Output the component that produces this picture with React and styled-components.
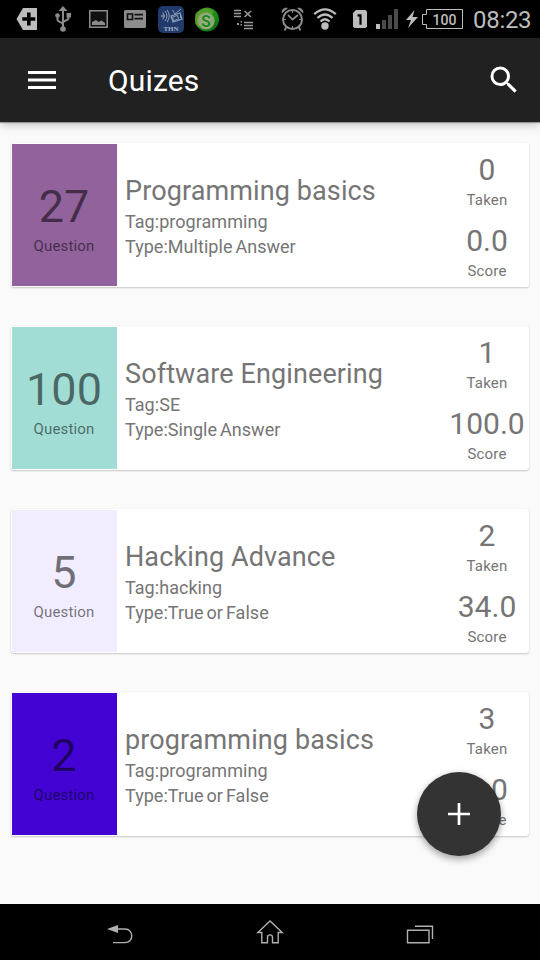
import React from "react";
import styled, { createGlobalStyle } from "styled-components";

const GlobalStyle = createGlobalStyle`
  * { box-sizing: border-box; }
  body { margin: 0; background: #fafafa; font-family: Roboto, sans-serif; }
`;

const Screen = styled.div`
  position: relative;
  display: flex;
  flex-direction: column;
  width: 540px;
  height: 960px;
  overflow: hidden;
  background: #fafafa;
`;

const StatusBar = styled.header`
  display: flex;
  align-items: center;
  height: 38px;
  flex: none;
  background: #000;
`;

const Icon = styled.svg`
  display: block;
  flex: none;
  width: ${(p) => p.$w}px;
  height: ${(p) => p.$h}px;
  margin-left: ${(p) => p.$gap || 0}px;
`;

const Clock = styled.time`
  margin-left: 10px;
  padding-top: 1px;
  font-size: 24px;
  line-height: 28px;
  letter-spacing: -0.3px;
  color: #bcbcbc;
`;

const AppBar = styled.div`
  position: relative;
  display: flex;
  align-items: center;
  height: 84px;
  flex: none;
  padding: 0 18px 0 24px;
  background: #212121;
  box-shadow: 0 1px 1px rgba(0, 0, 0, 0.3), 0 3px 9px rgba(0, 0, 0, 0.22);
`;

const Title = styled.h1`
  flex: 1;
  margin: 0 0 0 48px;
  padding-top: 2px;
  font-size: 30px;
  font-weight: 400;
  line-height: 36px;
  letter-spacing: 0.15px;
  color: #fff;
`;

const IconButton = styled.button`
  display: flex;
  padding: 0;
  border: 0;
  background: none;
`;

const List = styled.main`
  flex: 1;
  display: flex;
  flex-direction: column;
  gap: 39px;
  padding: 21px 11px 0;
`;

const Card = styled.article`
  display: flex;
  height: 144px;
  flex: none;
  padding: 1px 0 1px 1px;
  border-radius: 3px;
  background: #fff;
  box-shadow: 0 1px 2px rgba(0, 0, 0, 0.2), 0 0 2px rgba(0, 0, 0, 0.06);
`;

const CountPanel = styled.div`
  display: flex;
  flex-direction: column;
  align-items: center;
  gap: 4px;
  width: 105px;
  padding: 36px 1px 0 0;
  background: ${(p) => p.$color};
  color: rgba(0, 0, 0, 0.54);
`;

const Count = styled.div`
  font-size: 45px;
  line-height: 53px;
`;

const Caption = styled.div`
  font-size: 15px;
  line-height: 18px;
  letter-spacing: 0.18px;
`;

const Details = styled.div`
  flex: 1;
  padding: 31px 0 0 8px;
  color: #757575;
`;

const Name = styled.h2`
  margin: 0 0 2px;
  font-size: 27px;
  font-weight: 400;
  line-height: 32px;
  letter-spacing: 0.11px;
  white-space: nowrap;
`;

const Meta = styled.div`
  font-size: 18px;
  line-height: 25px;
  letter-spacing: 0.04px;
  word-spacing: -1.6px;
`;

const Stats = styled.div`
  display: flex;
  flex-direction: column;
  gap: 14px;
  width: 84px;
  padding-top: 8px;
  color: #757575;
  text-align: center;
`;

const Stat = styled.div`
  display: flex;
  flex-direction: column;
  gap: 4px;
`;

const StatValue = styled.div`
  font-size: 30px;
  line-height: 35px;
`;

const Fab = styled.button`
  position: absolute;
  left: 417px;
  top: 772px;
  display: flex;
  align-items: center;
  justify-content: center;
  width: 84px;
  height: 84px;
  padding: 0;
  border: 0;
  border-radius: 50%;
  background: #333;
  box-shadow: 0 4px 7px rgba(0, 0, 0, 0.28), 0 0 6px rgba(0, 0, 0, 0.12);
`;

const NavBar = styled.nav`
  display: flex;
  justify-content: center;
  gap: 122px;
  align-items: center;
  height: 56px;
  flex: none;
  padding-top: 2px;
  background: #000;
`;

const quizzes = [
  { count: 27, color: "#91629c", name: "Programming basics", tag: "programming", type: "Multiple Answer", taken: 0, score: "0.0" },
  { count: 100, color: "#a1dcd5", name: "Software Engineering", tag: "SE", type: "Single Answer", taken: 1, score: "100.0" },
  { count: 5, color: "#f1edfe", name: "Hacking Advance", tag: "hacking", type: "True or False", taken: 2, score: "34.0" },
  { count: 2, color: "#4304d3", name: "programming basics", tag: "programming", type: "True or False", taken: 3, score: "0.0" },
];

function StatusIcons() {
  return (
    <>
      <Icon $w={21} $h={22} $gap={16} viewBox="0 0 21 22">
        <path d="M.5 11 7 0h14v22H7z" fill="#bdbdbd" />
        <path d="M12.8 4.5v13M6.3 11h13" stroke="#000" strokeWidth="3.6" />
      </Icon>
      <Icon $w={16} $h={26} $gap={18} viewBox="0 0 16 26">
        <g fill="none" stroke="#8c8c8c" strokeWidth="2">
          <path d="M8 4v19M2.5 10v4c0 2 5.5 2 5.5 5M13.5 9v3c0 3-5.5 2-5.5 5" />
        </g>
        <g fill="#8c8c8c">
          <path d="m8 0 4.5 5h-9z" />
          <circle cx="2.5" cy="9.5" r="2.3" />
          <path d="M11.5 7H16v4.500h-4.500z" />
          <circle cx="8" cy="23" r="2.8" />
        </g>
      </Icon>
      <Icon $w={19} $h={18} $gap={18} viewBox="0 0 19 18">
        <rect x=".75" y=".75" width="17.5" height="16.5" fill="#111" stroke="#8c8c8c" strokeWidth="1.5" />
        <path d="M3 15v-3l4-2 2.500 2 3-1.500L16 13v2z" fill="#8c8c8c" />
      </Icon>
      <Icon $w={22} $h={18} $gap={16} viewBox="0 0 22 18">
        <rect width="22" height="18" rx="1.5" fill="#8c8c8c" />
        <path d="M3.500 4h5v5.500h-5zM10.500 4.700h8.500M10.500 8.700h8.500" fill="none" stroke="#111" strokeWidth="1.7" />
      </Icon>
      <Icon $w={26} $h={27} $gap={12} viewBox="0 0 26 27">
        <rect width="26" height="27" rx="5" fill="#21396b" />
        <g fill="none" stroke="#8c9bb5" strokeWidth="1">
          <circle cx="4.5" cy="10" r="1" />
          <path d="M5 6.500q3 3.500 0 7M7 5q4 5 0 10M9 4q4.500 6 0 12" />
          <path d="m13 10 9-3 2 6-9 3z" strokeWidth="1.3" />
          <path d="m14.500 11 5-1.600 1 3.600-5 1.700zM17 8l-2.500-4M17 8l6-5M22.500 9v3" />
        </g>
        <text x="13" y="24.500" textAnchor="middle" fontFamily="Liberation Serif, serif" fontWeight="700" fontSize="7" textLength="15" fill="#a5b0c4">THN</text>
      </Icon>
      <Icon $w={24} $h={25} $gap={11} viewBox="0 0 24 25">
        <defs>
          <linearGradient id="ring" x1="0" y1="0" x2=".8" y2="1">
            <stop offset="0" stopColor="#4b941e" />
            <stop offset=".6" stopColor="#179018" />
            <stop offset="1" stopColor="#126a12" />
          </linearGradient>
        </defs>
        <circle cx="12" cy="12.5" r="12" fill="url(#ring)" />
        <path d="M6 3a9.500 9.500 0 0 1 13 2L4 20A9 9 0 0 1 6 3" fill="#74a83d" opacity=".5" />
        <circle cx="11" cy="13.8" r="8.6" fill="#8fa673" />
        <text x="11" y="19.500" textAnchor="middle" fontFamily="Roboto, sans-serif" fontWeight="700" fontSize="16" fill="#168a14" stroke="#b5bba8" strokeWidth="1.2" paintOrder="stroke">S</text>
      </Icon>
      <Icon $w={19} $h={21} $gap={15} viewBox="0 0 19 21">
        <g fill="none" stroke="#9a9a9a" strokeWidth="1.4">
          <path d="M0 1.500h7M0 4.500h7M0 7.500h7M10 13.500h9M10 16.500h9M10 19.500h9" />
          <path d="m10.500 2 6.500 6M17 2l-6.500 6" strokeWidth="1.6" />
        </g>
        <path d="M3 14h2v2H3zM6.500 12h1.500v1.500H6.500zM6.500 15h1.500v1.500H6.500z" fill="#9a9a9a" />
      </Icon>
      <Icon $w={23} $h={24} $gap={28} viewBox="0 0 23 24">
        <g fill="none" stroke="#8c8c8c">
          <circle cx="11.5" cy="12.5" r="9.5" strokeWidth="2" />
          <path d="m7 8 4.500 4.500L17 8M5.500 20l-2 3.500M17.500 20l2 3.500" strokeWidth="1.7" />
          <path d="M11.500 4v2M11.500 19v2M3 12.500h2M18 12.500h2" />
        </g>
        <path d="M.8 6.500C0 3 3-.5 7 1zM22.200 6.500C23 3 20-.5 16 1z" fill="#8c8c8c" />
      </Icon>
      <Icon $w={24} $h={22} $gap={9} viewBox="0 0 24 22">
        <g fill="none" stroke="#bdbdbd" strokeWidth="2.3">
          <path d="M1.200 6.200Q12-3.500 22.800 6.200M4.500 10q7.500-7 15 0M7.500 13.500q4.500-4.500 9 0" />
        </g>
        <circle cx="12" cy="18" r="3.7" fill="#bdbdbd" />
      </Icon>
      <Icon $w={14} $h={18} $gap={16} viewBox="0 0 14 18">
        <path d="M3 0h9.500L14 1.500v15L12.500 18h-11L0 16.500V3z" fill="#bdbdbd" />
        <path d="M4.500 5.300h3v9.500" fill="none" stroke="#000" strokeWidth="2.2" />
      </Icon>
      <Icon $w={22} $h={20} $gap={9} viewBox="0 0 22 20">
        <path d="M0 15h4v5H0z" fill="#bdbdbd" />
        <path d="M6 11h4v9H6zM12 6h4v14h-4zM18 0h4v20h-4z" fill="#4b4b4b" />
      </Icon>
      <Icon $w={12} $h={18} $gap={8} viewBox="0 0 12 18">
        <path d="M8.500 0 0 10h5L2 18 12 7H6.500z" fill="#bdbdbd" />
      </Icon>
      <Icon $w={41} $h={20} $gap={4} viewBox="0 0 41 20">
        <path d="M4.500.5h36v19h-36v-4h-4v-10h4z" fill="none" stroke="#bdbdbd" />
        <text x="22.5" y="15.8" textAnchor="middle" fontFamily="Roboto, sans-serif" fontWeight="500" fontSize="15.5" textLength="24" lengthAdjust="spacingAndGlyphs" fill="#bdbdbd">100</text>
      </Icon>
    </>
  );
}

function QuizCard({ quiz }) {
  return (
    <Card>
      <CountPanel $color={quiz.color}>
        <Count>{quiz.count}</Count>
        <Caption>Question</Caption>
      </CountPanel>
      <Details>
        <Name>{quiz.name}</Name>
        <Meta>Tag:{quiz.tag}</Meta>
        <Meta>Type:{quiz.type}</Meta>
      </Details>
      <Stats>
        <Stat>
          <StatValue>{quiz.taken}</StatValue>
          <Caption>Taken</Caption>
        </Stat>
        <Stat>
          <StatValue>{quiz.score}</StatValue>
          <Caption>Score</Caption>
        </Stat>
      </Stats>
    </Card>
  );
}

export default function App() {
  return (
    <Screen>
      <GlobalStyle />
      <StatusBar>
        <StatusIcons />
        <Clock>08:23</Clock>
      </StatusBar>
      <AppBar>
        <IconButton aria-label="Menu">
          <Icon $w={36} $h={36} viewBox="0 0 36 36">
            <path d="M4 9h28v3H4zM4 16.500h28v3H4zM4 24h28v3H4z" fill="#fff" />
          </Icon>
        </IconButton>
        <Title>Quizes</Title>
        <IconButton aria-label="Search">
          <Icon $w={36} $h={36} viewBox="0 0 24 24">
            <path
              d="M15.500 14h-.79l-.28-.27A6.471 6.471 0 0 0 16 9.500 6.500 6.500 0 1 0 9.500 16c1.610 0 3.090-.59 4.230-1.570l.27.28v.79l5 4.990L20.490 19l-4.990-5zm-6 0C7.010 14 5 11.990 5 9.500S7.010 5 9.500 5 14 7.010 14 9.500 11.990 14 9.500 14z"
              fill="#fff"
            />
          </Icon>
        </IconButton>
      </AppBar>
      <List>
        {quizzes.map((quiz, i) => (
          <QuizCard key={i} quiz={quiz} />
        ))}
      </List>
      <NavBar>
        <Icon $w={28} $h={26} viewBox="0 0 28 26">
          <path d="M11 9h8c9 0 9 13.600 0 13.600H7" fill="none" stroke="#b0b0b0" strokeWidth="1.4" />
          <path d="M1 9 12 5v8z" fill="#b0b0b0" />
        </Icon>
        <Icon $w={28} $h={26} viewBox="0 0 28 26">
          <path d="M14 .9 1.800 12.500h4v10.300h5.700V17.500c0-3.500 5-3.500 5 0v5.300h5.700V12.500h4z" fill="none" stroke="#b0b0b0" strokeWidth="1.4" />
        </Icon>
        <Icon $w={28} $h={26} viewBox="0 0 28 26">
          <path d="M1.500 10.300h21.500v12.500H1.500zM9 6.300h17.500V19" fill="none" stroke="#b0b0b0" strokeWidth="1.4" />
        </Icon>
      </NavBar>
      <Fab aria-label="Add quiz">
        <Icon $w={22} $h={22} viewBox="0 0 22 22">
          <path d="M0 11h22M11 0v22" stroke="#fff" strokeWidth="2.7" />
        </Icon>
      </Fab>
    </Screen>
  );
}
